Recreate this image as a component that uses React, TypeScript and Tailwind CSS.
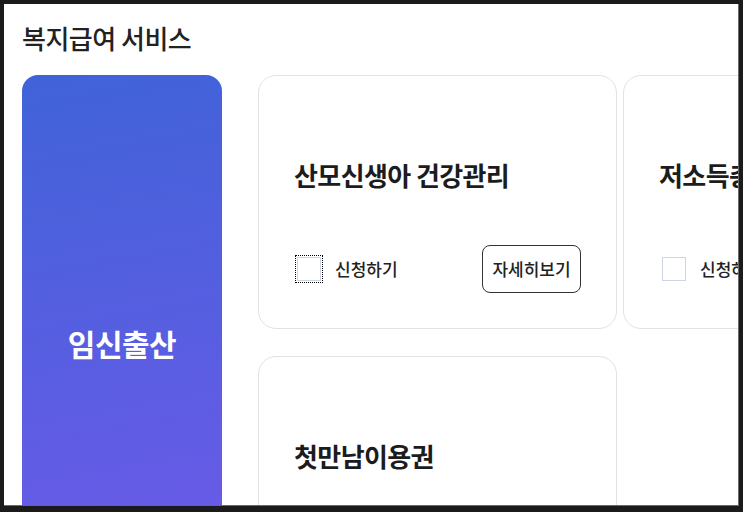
import React from "react";

const font = { fontFamily: '"Noto Sans CJK KR", "Noto Sans", sans-serif' };

function Card({ title, actions = "full" }: { title: string; actions?: "full" | "check" | "none" }) {
  return (
    <div className="w-[359px] shrink-0 h-[254px] rounded-[18px] border border-[#e2e2e2] bg-white px-[35px] pt-[81px] flex flex-col">
      <div className="text-[26px] font-bold text-[#1c1c1c] leading-[36px] whitespace-nowrap tracking-[-0.6px]">{title}</div>
      {actions !== "none" && (
        <div className="mt-[52px] h-[48px] flex items-center justify-between">
          <label className="flex items-center gap-[14px] pl-[3px]">
            <span
              className={
                actions === "full"
                  ? "w-[24px] h-[24px] border border-[#cdd4e6] bg-white outline-1 outline-dotted outline-black outline-offset-[1px] block"
                  : "w-[24px] h-[24px] border border-[#cdd4e6] bg-white block"
              }
            />
            <span className="text-[17px] font-medium text-[#222] whitespace-nowrap">신청하기</span>
          </label>
          {actions === "full" && (
            <button className="h-[48px] w-[99px] rounded-[8px] border border-[#333] text-[17px] font-medium text-[#222] bg-white">
              자세히보기
            </button>
          )}
        </div>
      )}
    </div>
  );
}

export default function App() {
  return (
    <div style={font} className="w-[743px] h-[512px] bg-[#1b1b1b] pt-[4px] pl-[4px] pr-[4px] pb-[6px]">
      <div className="w-full h-full bg-white border-r border-b border-[#6a6a6a] overflow-hidden px-[18px]">
        <h1 className="pt-[16px] text-[26px] font-medium text-[#222] leading-[36px] tracking-[-0.5px]">복지급여 서비스</h1>
        <div className="mt-[19px] flex gap-[36px]">
          <div className="w-[200px] shrink-0 h-[536px] rounded-[16px] bg-[linear-gradient(170deg,#4063d8,#7059ea)] flex items-center justify-center">
            <span className="text-white text-[30px] font-bold tracking-[-0.5px]">임신출산</span>
          </div>
          <div className="grid grid-cols-[359px_359px] gap-x-[6px] gap-y-[26px]">
            <Card title="산모신생아 건강관리" />
            <Card title="저소득층 기저귀·조제분유" actions="check" />
            <Card title="첫만남이용권" actions="none" />
          </div>
        </div>
      </div>
    </div>
  );
}
